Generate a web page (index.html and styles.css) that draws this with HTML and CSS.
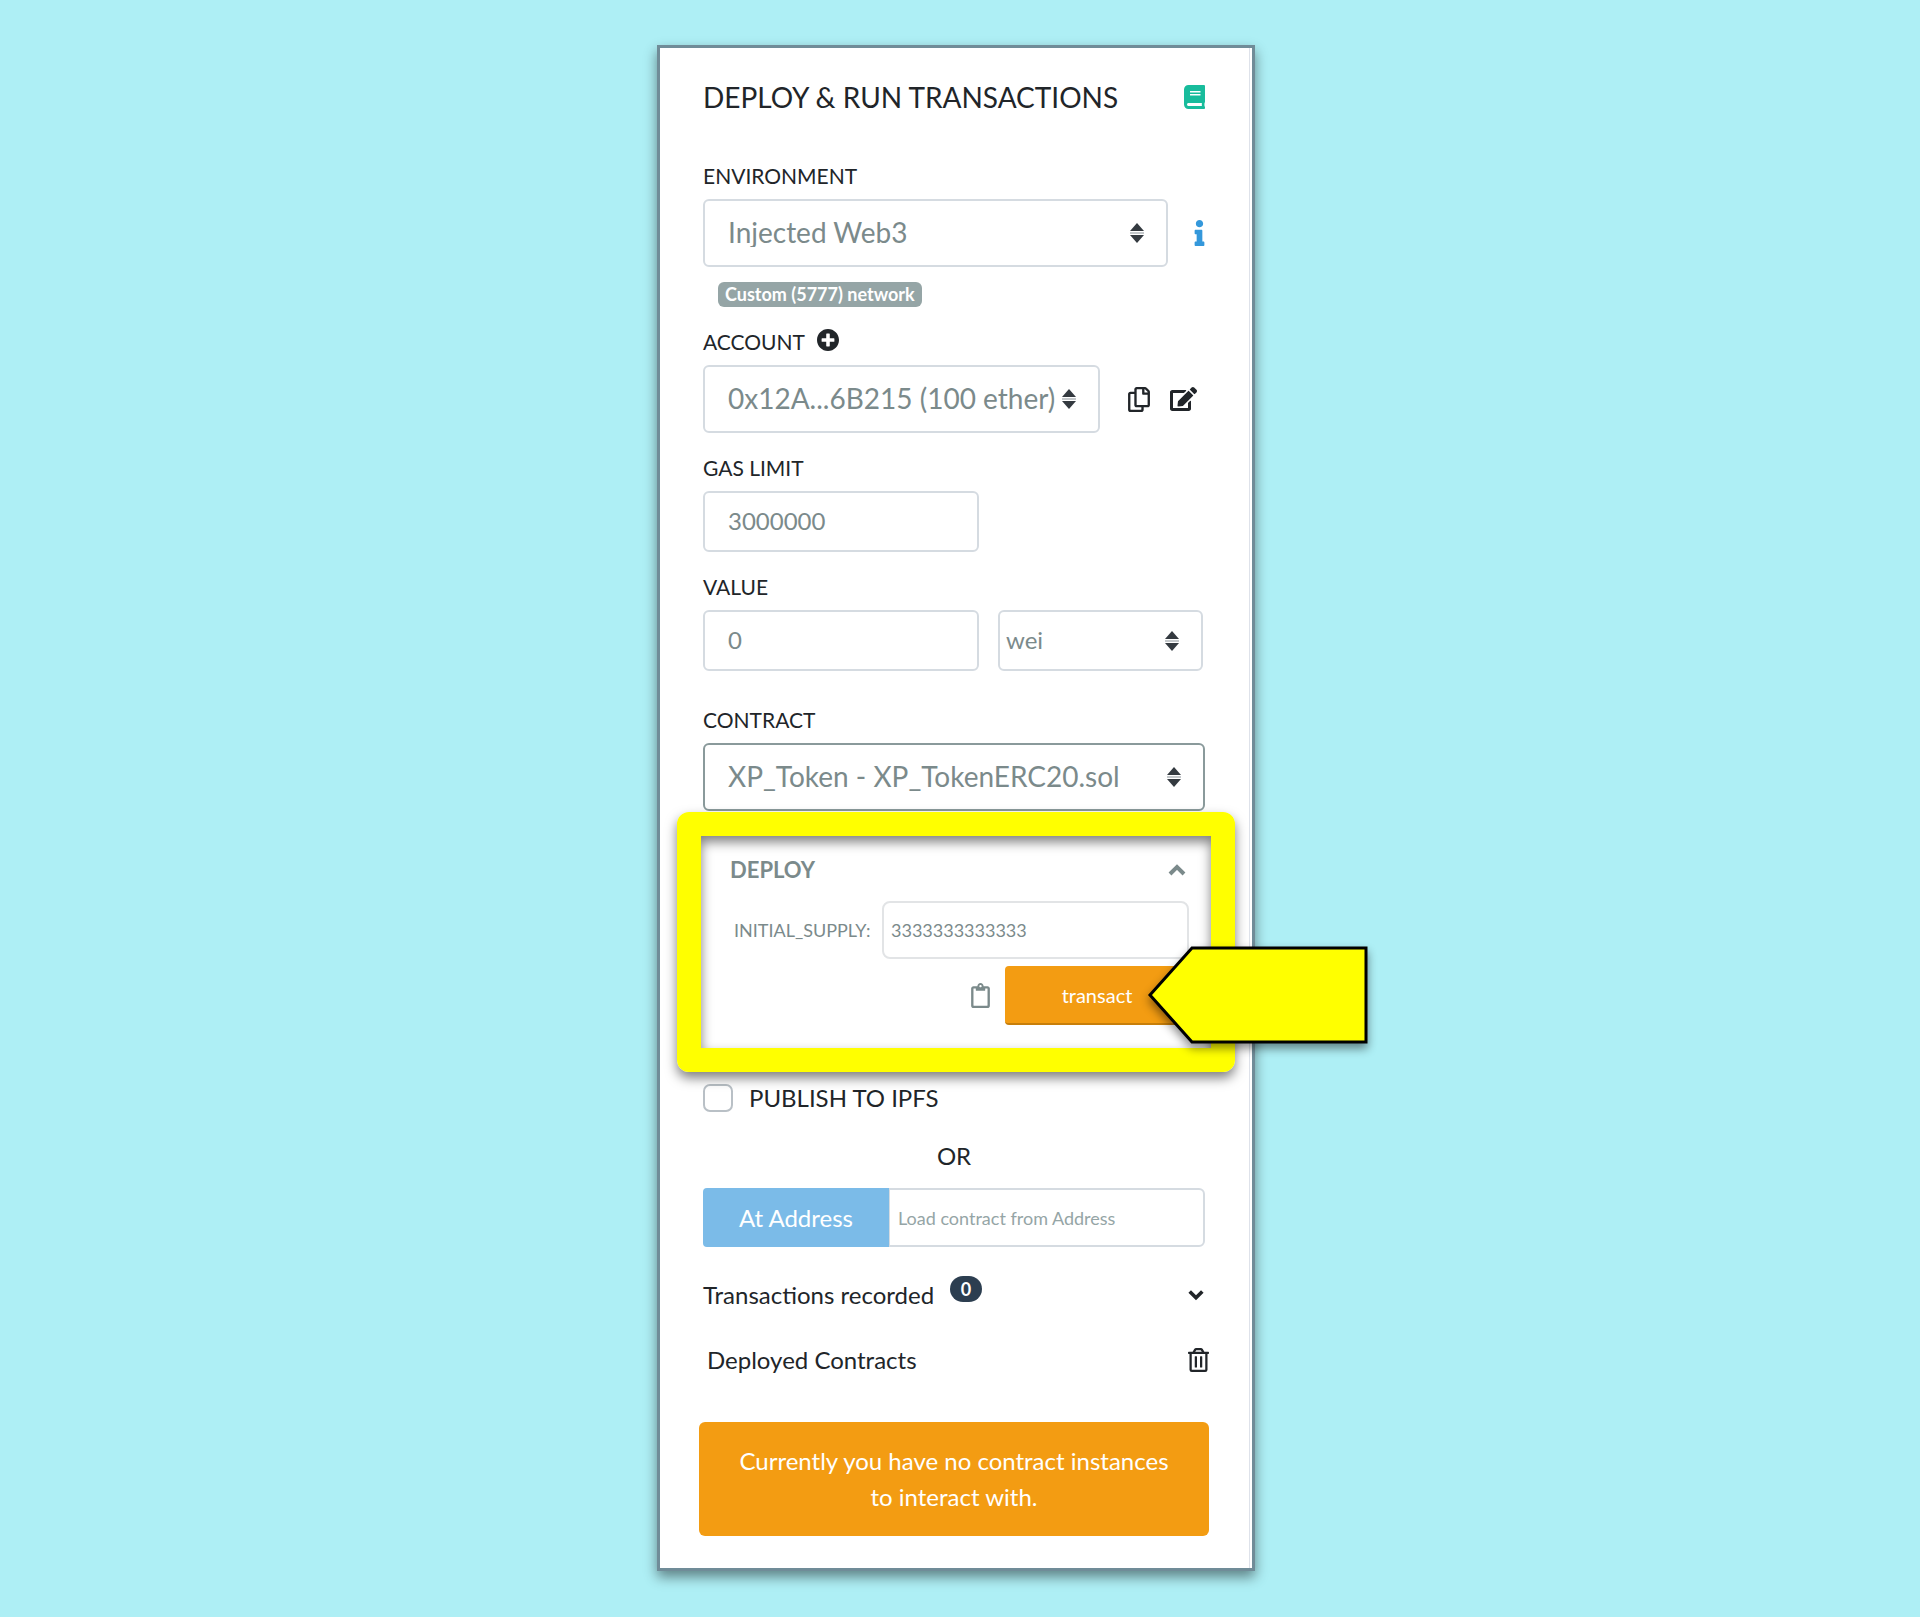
FILE: index.html
```html
<!DOCTYPE html>
<html lang="en">
<head>
<meta charset="utf-8">
<meta name="viewport" content="width=device-width, initial-scale=1">
<title>Deploy &amp; Run Transactions</title>
<link rel="stylesheet" href="styles.css">
</head>
<body>
<svg class="sprite" aria-hidden="true">
  <symbol id="sort" viewBox="0 0 16 20"><path d="M8 0l7 8H1zM8 20l7-8H1z" fill="#343a40"/><path d="M1 9h14v2H1z" fill="#c4c8cb"/></symbol>
</svg>
<main class="panel">
  <div class="panel-body">
    <header class="title-row">
      <h1 class="title">DEPLOY &amp; RUN TRANSACTIONS</h1>
      <a class="docs" href="#docs" aria-label="Documentation">
        <svg class="icon-docs" viewBox="0 0 448 512"><path fill="currentColor" d="M448 360V24c0-13.300-10.700-24-24-24H96C43 0 0 43 0 96v320c0 53 43 96 96 96h328c13.300 0 24-10.700 24-24v-16c0-7.500-3.500-14.300-8.900-18.700-4.200-15.400-4.200-59.300 0-74.700 5.400-4.300 8.900-11.100 8.900-18.600zM128 134c0-3.300 2.700-6 6-6h212c3.300 0 6 2.700 6 6v20c0 3.300-2.700 6-6 6H134c-3.300 0-6-2.700-6-6v-20zm0 64c0-3.300 2.700-6 6-6h212c3.300 0 6 2.700 6 6v20c0 3.300-2.700 6-6 6H134c-3.300 0-6-2.700-6-6v-20zm253.400 250H96c-17.700 0-32-14.300-32-32 0-17.600 14.400-32 32-32h285.400c-1.900 17.100-1.900 46.900 0 64z"/></svg>
      </a>
    </header>

    <section class="field">
      <label class="label" for="environment">ENVIRONMENT</label>
      <div class="control-row env-row">
        <div class="select-wrap">
          <select class="control select" id="environment"><option>Injected Web3</option></select>
          <svg class="sort"><use href="#sort"/></svg>
        </div>
        <a class="info" href="#environments" aria-label="About environments">
          <svg class="icon-info" viewBox="0 0 192 512"><path fill="currentColor" d="M20 424.229h20V279.771H20c-11.046 0-20-8.954-20-20V212c0-11.046 8.954-20 20-20h112c11.046 0 20 8.954 20 20v212.229h20c11.046 0 20 8.954 20 20V492c0 11.046-8.954 20-20 20H20c-11.046 0-20-8.954-20-20v-47.771c0-11.046 8.954-20 20-20zM96 0C56.235 0 24 32.235 24 72s32.235 72 72 72 72-32.235 72-72S135.764 0 96 0z"/></svg>
        </a>
      </div>
      <span class="network">Custom (5777) network</span>
    </section>

    <section class="field">
      <div class="label-row">
        <label class="label" for="account">ACCOUNT</label>
        <button class="icon-button" type="button" aria-label="Create account">
          <svg class="icon-plus" viewBox="8 8 496 496"><path fill="currentColor" d="M256 8C119 8 8 119 8 256s111 248 248 248 248-111 248-248S393 8 256 8zm144 276c0 6.600-5.400 12-12 12h-92v92c0 6.600-5.400 12-12 12h-56c-6.600 0-12-5.400-12-12v-92h-92c-6.600 0-12-5.400-12-12v-56c0-6.600 5.400-12 12-12h92v-92c0-6.600 5.400-12 12-12h56c6.600 0 12 5.400 12 12v92h92c6.600 0 12 5.400 12 12v56z"/></svg>
        </button>
      </div>
      <div class="control-row account-row">
        <div class="select-wrap">
          <select class="control select" id="account"><option>0x12A...6B215 (100 ether)</option></select>
          <svg class="sort"><use href="#sort"/></svg>
        </div>
        <div class="account-actions">
          <button class="icon-button" type="button" aria-label="Copy account">
            <svg class="icon-copy" viewBox="0 0 448 512"><path fill="currentColor" d="M433.941 65.941l-51.882-51.882A48 48 0 0 0 348.118 0H176c-26.510 0-48 21.490-48 48v48H48c-26.510 0-48 21.490-48 48v320c0 26.510 21.490 48 48 48h224c26.510 0 48-21.490 48-48v-48h80c26.510 0 48-21.490 48-48V99.882a48 48 0 0 0-14.059-33.941zM266 464H54a6 6 0 0 1-6-6V150a6 6 0 0 1 6-6h74v224c0 26.510 21.490 48 48 48h96v42a6 6 0 0 1-6 6zm128-96H182a6 6 0 0 1-6-6V54a6 6 0 0 1 6-6h106v88c0 13.255 10.745 24 24 24h88v202a6 6 0 0 1-6 6zm6-256h-64V48h9.632c1.591 0 3.117.632 4.243 1.757l48.368 48.368a6 6 0 0 1 1.757 4.243V112z"/></svg>
          </button>
          <button class="icon-button" type="button" aria-label="Sign a message">
            <svg class="icon-edit" viewBox="0 0 576 512"><path fill="currentColor" d="M402.600 83.200l90.200 90.200c3.800 3.800 3.800 10 0 13.800L274.400 405.600l-92.800 10.300c-12.400 1.400-22.900-9.100-21.500-21.500l10.300-92.800L388.800 83.200c3.800-3.800 10-3.800 13.800 0zm162-22.900l-48.800-48.800c-15.200-15.200-39.900-15.200-55.200 0l-35.400 35.400c-3.800 3.800-3.800 10 0 13.800l90.200 90.200c3.800 3.800 10 3.800 13.800 0l35.400-35.400c15.200-15.300 15.200-40 0-55.200zM384 346.200V448H64V128h229.800c3.200 0 6.200-1.300 8.500-3.500l40-40c7.600-7.600 2.200-20.500-8.500-20.500H48C21.500 64 0 85.500 0 112v352c0 26.500 21.500 48 48 48h352c26.500 0 48-21.500 48-48V306.200c0-10.700-12.900-16-20.500-8.500l-40 40c-2.200 2.300-3.500 5.300-3.500 8.500z"/></svg>
          </button>
        </div>
      </div>
    </section>

    <section class="field">
      <label class="label" for="gas">GAS LIMIT</label>
      <div class="control-row value-row">
        <input class="control number" id="gas" type="text" value="3000000">
      </div>
    </section>

    <section class="field">
      <label class="label" for="value">VALUE</label>
      <div class="control-row value-row">
        <input class="control number" id="value" type="text" value="0">
        <div class="select-wrap unit">
          <select class="control number unit-select" aria-label="Unit"><option>wei</option></select>
          <svg class="sort"><use href="#sort"/></svg>
        </div>
      </div>
    </section>

    <section class="field contract">
      <label class="label" for="contract">CONTRACT</label>
      <div class="select-wrap">
        <select class="control select active" id="contract"><option>XP_Token - XP_TokenERC20.sol</option></select>
        <svg class="sort"><use href="#sort"/></svg>
      </div>
    </section>

    <section class="deploy">
      <div class="deploy-head">
        <h2 class="deploy-title">DEPLOY</h2>
        <button class="icon-button" type="button" aria-label="Collapse">
          <svg class="chevron" viewBox="0 0 20 12"><path d="M3 10l7-7 7 7" fill="none" stroke="currentColor" stroke-width="4"/></svg>
        </button>
      </div>
      <div class="argument">
        <label class="argument-label" for="supply">INITIAL_SUPPLY:</label>
        <input class="supply" id="supply" type="text" value="3333333333333">
      </div>
      <div class="deploy-actions">
        <button class="icon-button" type="button" aria-label="Copy parameters">
          <svg class="icon-clipboard" viewBox="0 0 384 512"><path fill="currentColor" d="M336 64h-80c0-35.300-28.700-64-64-64s-64 28.700-64 64H48C21.500 64 0 85.500 0 112v352c0 26.500 21.500 48 48 48h288c26.500 0 48-21.500 48-48V112c0-26.500-21.500-48-48-48zM192 40c13.300 0 24 10.700 24 24s-10.700 24-24 24-24-10.700-24-24 10.700-24 24-24zm144 418c0 3.300-2.700 6-6 6H54c-3.300 0-6-2.700-6-6V118c0-3.300 2.700-6 6-6h42v36c0 6.600 5.400 12 12 12h168c6.600 0 12-5.400 12-12v-36h42c3.300 0 6 2.700 6 6z"/></svg>
        </button>
        <button class="transact" type="button">transact</button>
      </div>
      <svg class="pointer" viewBox="0 0 222 98" aria-hidden="true"><path d="M3 49L45 2h174v94H45z" fill="#ffff00" stroke="#000" stroke-width="3"/></svg>
    </section>

    <div class="publish">
      <input class="checkbox" id="ipfs" type="checkbox">
      <label for="ipfs">PUBLISH TO IPFS</label>
    </div>
    <p class="or">OR</p>
    <div class="at-address">
      <button class="at-button" type="button">At Address</button>
      <input class="address" type="text" placeholder="Load contract from Address" aria-label="Contract address">
    </div>

    <div class="list-row">
      <div class="recorded">Transactions recorded <span class="count">0</span></div>
      <button class="icon-button" type="button" aria-label="Expand transactions">
        <svg class="chevron small" viewBox="0 0 20 12"><path d="M3 2l7 7 7-7" fill="none" stroke="currentColor" stroke-width="4"/></svg>
      </button>
    </div>
    <div class="list-row deployed">
      <span>Deployed Contracts</span>
      <button class="icon-button" type="button" aria-label="Clear contracts">
        <svg class="icon-trash" viewBox="0 0 448 512"><path fill="currentColor" d="M268 416h24a12 12 0 0 0 12-12V188a12 12 0 0 0-12-12h-24a12 12 0 0 0-12 12v216a12 12 0 0 0 12 12zM432 80h-82.410l-34-56.700A48 48 0 0 0 274.410 0H173.590a48 48 0 0 0-41.160 23.300L98.410 80H16A16 16 0 0 0 0 96v16a16 16 0 0 0 16 16h16v336a48 48 0 0 0 48 48h288a48 48 0 0 0 48-48V128h16a16 16 0 0 0 16-16V96a16 16 0 0 0-16-16zM171.840 50.910A6 6 0 0 1 177 48h94a6 6 0 0 1 5.150 2.910L293.610 80H154.390zM368 464H80V128h288zm-212-48h24a12 12 0 0 0 12-12V188a12 12 0 0 0-12-12h-24a12 12 0 0 0-12 12v216a12 12 0 0 0 12 12z"/></svg>
      </button>
    </div>
    <p class="notice">Currently you have no contract instances to interact with.</p>
  </div>
</main>
</body>
</html>
```
FILE: styles.css
```css
* {
  box-sizing: border-box;
}

body {
  margin: 0;
  padding: 45px 8px 45px 0;
  background: #aeeff5;
  color: #212529;
  font-family: Lato, "Liberation Sans", sans-serif;
  font-size: 24px;
  line-height: 30px;
}

h1, h2, p {
  margin: 0;
}

input, select, button {
  font: inherit;
  color: inherit;
  margin: 0;
}

svg {
  display: block;
}

.sprite {
  position: absolute;
  width: 0;
  height: 0;
}

.panel {
  max-width: 598px;
  margin: 0 auto;
  padding-right: 2px;
  background: #fff;
  border: 3px solid #708c98;
  box-shadow: 0 6px 12px rgba(0, 0, 0, 0.45);
}

.panel-body {
  padding: 32px 44px 32px 43px;
  border-right: 1px solid #dee2ea;
}

.title-row,
.deploy-head,
.list-row {
  display: flex;
  align-items: center;
  justify-content: space-between;
}

.title-row {
  margin-bottom: 49px;
}

.title {
  font-size: 28px;
  font-weight: 400;
  line-height: 34px;
}

.docs {
  color: #18bc9c;
}

.icon-docs {
  width: 21px;
  height: 24px;
}

.field {
  margin-bottom: 22px;
}

.label {
  display: block;
  font-size: 21px;
  line-height: 26px;
  margin-bottom: 10px;
}

.label-row {
  display: flex;
  align-items: flex-start;
  gap: 12px;
}

.icon-button {
  display: block;
  padding: 0;
  border: 0;
  background: none;
}

.icon-plus {
  width: 22px;
  height: 22px;
}

.control-row {
  display: grid;
  align-items: center;
}

.env-row {
  grid-template-columns: 1fr 37px;
}

.account-row {
  grid-template-columns: 1fr 105px;
}

.value-row {
  grid-template-columns: 276px 1fr;
  column-gap: 19px;
}

.select-wrap {
  display: grid;
  align-items: center;
}

.select-wrap > * {
  grid-area: 1 / 1;
}

.sort {
  width: 16px;
  height: 20px;
  justify-self: end;
  margin-right: 23px;
  pointer-events: none;
}

.control {
  width: 100%;
  min-width: 0;
  padding: 0 23px 2px;
  color: #7b8a8b;
  background: #fff;
  border: 2px solid #d5dbe1;
  border-radius: 6px;
  appearance: none;
}

.select {
  height: 68px;
  font-size: 28px;
}

.active {
  border-color: #8a9a9b;
}

.number {
  height: 61px;
}

.unit {
  margin-right: 2px;
}

.unit-select {
  padding: 0 6px 2px;
}

.info {
  justify-self: end;
  color: #3498db;
}

.icon-info {
  width: 11px;
  height: 26px;
}

.network {
  display: block;
  width: fit-content;
  margin: 15px 0 0 15px;
  padding: 0 7px;
  color: #fff;
  background: #95a5a6;
  border-radius: 6px;
  font-size: 18px;
  font-weight: 700;
  line-height: 25px;
}

.account-actions {
  display: flex;
  gap: 20px;
  padding-left: 28px;
}

.icon-copy {
  width: 22px;
  height: 25px;
}

.icon-edit {
  width: 27px;
  height: 24px;
}

.contract {
  margin: 36px 0 1px;
}

/* Highlighted area around the deploy form */
.deploy {
  position: relative;
  margin: 0 -30px 12px -26px;
  padding: 19px 22px 23px 29px;
  color: #7b8a8b;
  border: 24px solid #ffff00;
  border-radius: 12px;
  box-shadow: 0 6px 12px rgba(0, 0, 0, 0.5), inset 0 6px 12px rgba(0, 0, 0, 0.5);
}

.deploy-title {
  font-size: 22px;
  font-weight: 700;
  line-height: 30px;
}

.chevron {
  width: 20px;
  height: 12px;
  margin-right: 2px;
}

.argument {
  display: grid;
  grid-template-columns: auto 307px;
  justify-content: space-between;
  align-items: center;
  margin: 16px 0 7px;
}

.argument-label {
  padding-left: 4px;
  font-size: 18px;
}

.supply {
  width: 100%;
  height: 58px;
  padding: 0 7px;
  border: 2px solid #e2e4e6;
  border-radius: 8px;
  background: #fff;
  font-size: 18px;
}

.deploy-actions {
  display: flex;
  align-items: center;
  justify-content: flex-end;
  gap: 15px;
}

.icon-clipboard {
  width: 19px;
  height: 25px;
}

.transact {
  width: 184px;
  height: 59px;
  padding: 0;
  color: #fff;
  background: #f39c12;
  border: 0;
  border-bottom: 2px solid #c87f0a;
  border-radius: 4px;
  font-size: 20px;
}

.pointer {
  position: absolute;
  left: 446px;
  top: 110px;
  width: 222px;
  height: 98px;
  filter: drop-shadow(0 5px 5px rgba(0, 0, 0, 0.45));
}

.publish {
  display: flex;
  align-items: center;
  gap: 16px;
  height: 28px;
}

.checkbox {
  width: 30px;
  height: 28px;
  appearance: none;
  background: #fff;
  border: 2px solid #b9c0c6;
  border-radius: 7px;
}

.or {
  margin: 29px 0 17px;
  text-align: center;
}

.at-address {
  display: grid;
  grid-template-columns: 186px 1fr;
  height: 59px;
  margin-bottom: 33px;
}

.at-button {
  padding: 0;
  color: #fff;
  background: #7bbbe8;
  border: 0;
  border-radius: 4px 0 0 4px;
}

.address {
  width: 100%;
  padding: 0 8px;
  border: 2px solid #d5dbe1;
  border-left-width: 1px;
  border-radius: 0 6px 6px 0;
  font-size: 18px;
}

.address::placeholder {
  color: #95a5a6;
  opacity: 1;
}

.recorded {
  display: flex;
  gap: 16px;
}

.count {
  align-self: flex-start;
  width: 32px;
  margin-top: -4px;
  color: #fff;
  background: #2c3e50;
  border-radius: 13px;
  font-size: 18px;
  font-weight: 700;
  line-height: 26px;
  text-align: center;
}

.small {
  width: 18px;
  margin-right: 0;
}

.deployed {
  margin: 35px -4px 47px 4px;
}

.icon-trash {
  width: 21px;
  height: 24px;
}

.notice {
  margin: 0 -4px;
  padding: 21px 36px;
  color: #fff;
  background: #f39c12;
  border-radius: 6px;
  line-height: 36px;
  text-align: center;
}
```
